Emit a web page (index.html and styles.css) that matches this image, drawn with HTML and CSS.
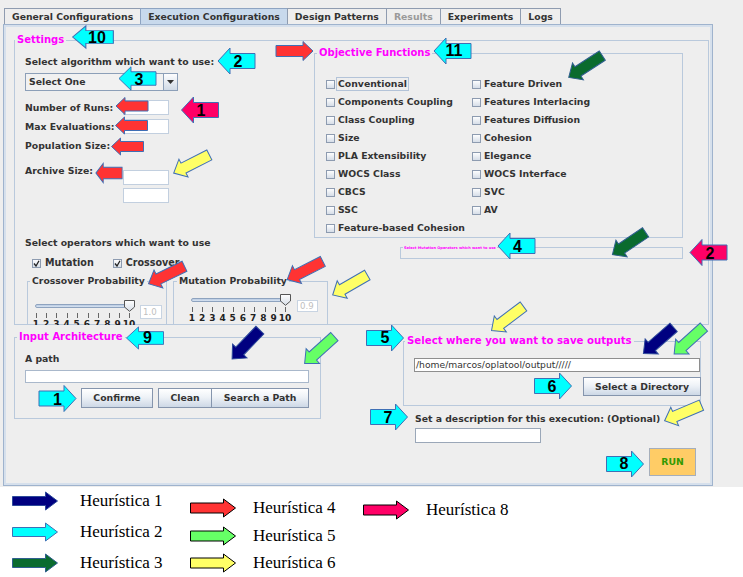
FILE: index.html
```html
<!DOCTYPE html>
<html>
<head>
<meta charset="utf-8">
<link rel="stylesheet" href="styles.css">
</head>
<body>
<div class="app">
  <div class="tabs">
    <div class="tab">General Configurations</div>
    <div class="tab sel">Execution Configurations</div>
    <div class="tab">Design Patterns</div>
    <div class="tab dis">Results</div>
    <div class="tab">Experiments</div>
    <div class="tab">Logs</div>
  </div>
  <div class="panel">
    <div class="group settings">
      <span class="gtitle mag t-settings">Settings</span>
      <div class="s-top">
        <div class="s-left">
          <div class="lbl">Select algorithm which want to use:</div>
          <div class="combo">
            <span class="combo-text">Select One</span>
            <span class="combo-btn"><svg width="7" height="4" viewBox="0 0 7 4"><path d="M0 0H7L3.5 4Z" fill="#333"/></svg></span>
          </div>
          <div class="frow r1"><span class="flbl">Number of Runs:</span><span class="field fnum"></span></div>
          <div class="frow r2"><span class="flbl">Max Evaluations:</span><span class="field fnum"></span></div>
          <div class="frow r3"><span class="flbl">Population Size:</span></div>
          <div class="frow archive"><span class="flbl">Archive Size:</span><span class="field fnum arch1"></span></div>
          <span class="field fnum arch2"></span>
        </div>
        <div class="group objective">
          <span class="gtitle mag t-obj">Objective Functions</span>
          <div class="cb-grid">
            <div class="cb"><span class="box"></span><span class="cbl focus">Conventional</span></div>
            <div class="cb"><span class="box"></span><span class="cbl">Components Coupling</span></div>
            <div class="cb"><span class="box"></span><span class="cbl">Class Coupling</span></div>
            <div class="cb"><span class="box"></span><span class="cbl">Size</span></div>
            <div class="cb"><span class="box"></span><span class="cbl">PLA Extensibility</span></div>
            <div class="cb"><span class="box"></span><span class="cbl">WOCS Class</span></div>
            <div class="cb"><span class="box"></span><span class="cbl">CBCS</span></div>
            <div class="cb"><span class="box"></span><span class="cbl">SSC</span></div>
            <div class="cb"><span class="box"></span><span class="cbl">Feature-based Cohesion</span></div>
            <div class="cb"><span class="box"></span><span class="cbl">Feature Driven</span></div>
            <div class="cb"><span class="box"></span><span class="cbl">Features Interlacing</span></div>
            <div class="cb"><span class="box"></span><span class="cbl">Features Diffusion</span></div>
            <div class="cb"><span class="box"></span><span class="cbl">Cohesion</span></div>
            <div class="cb"><span class="box"></span><span class="cbl">Elegance</span></div>
            <div class="cb"><span class="box"></span><span class="cbl">WOCS Interface</span></div>
            <div class="cb"><span class="box"></span><span class="cbl">SVC</span></div>
            <div class="cb"><span class="box"></span><span class="cbl">AV</span></div>
          </div>
        </div>
      </div>
      <div class="s-bottom">
        <div class="ops">
          <div class="lbl ops-lbl">Select operators which want to use</div>
          <div class="ops-checks">
            <div class="cb cb-mut"><span class="box"><svg width="7" height="7" viewBox="0 0 7 7"><path d="M1 3.5L3 6L6 0.8" fill="none" stroke="#222" stroke-width="1.3"/></svg></span><span class="cbl">Mutation</span></div>
            <div class="cb cb-cross"><span class="box"><svg width="7" height="7" viewBox="0 0 7 7"><path d="M1 3.5L3 6L6 0.8" fill="none" stroke="#222" stroke-width="1.3"/></svg></span><span class="cbl">Crossover</span></div>
          </div>
          <div class="prob-row">
            <div class="group prob cross">
              <span class="gtitle t-prob">Crossover Probability</span>
              <div class="slider">
                <div class="sbody">
                  <div class="track-wrap"><div class="track"></div><svg class="thumb" width="12" height="12" viewBox="0 0 12 12"><defs><linearGradient id="tg" x1="0" y1="0" x2="0" y2="1"><stop offset="0" stop-color="#ffffff"/><stop offset="1" stop-color="#d6dde6"/></linearGradient></defs><path d="M0.5 0.5H10.5V7L5.5 11.3L0.5 7Z" fill="url(#tg)" stroke="#555"/></svg></div>
                  <div class="ticks"><i></i><i></i><i></i><i></i><i></i><i></i><i></i><i></i><i></i><i></i></div>
                  <div class="nums"><span>1</span><span>2</span><span>3</span><span>4</span><span>5</span><span>6</span><span>7</span><span>8</span><span>9</span><span>10</span></div>
                </div>
                <span class="field val">1.0</span>
              </div>
            </div>
            <div class="group prob mut">
              <span class="gtitle t-prob2">Mutation Probability</span>
              <div class="slider">
                <div class="sbody">
                  <div class="track-wrap"><div class="track"></div><svg class="thumb" width="12" height="12" viewBox="0 0 12 12"><path d="M0.5 0.5H10.5V7L5.5 11.3L0.5 7Z" fill="url(#tg)" stroke="#555"/></svg></div>
                  <div class="ticks"><i></i><i></i><i></i><i></i><i></i><i></i><i></i><i></i><i></i><i></i></div>
                  <div class="nums"><span>1</span><span>2</span><span>3</span><span>4</span><span>5</span><span>6</span><span>7</span><span>8</span><span>9</span><span>10</span></div>
                </div>
                <span class="field val val2">0.9</span>
              </div>
            </div>
          </div>
        </div>
        <div class="group mutops"><span class="gtitle tiny">Select Mutation Operators which want to use</span></div>
      </div>
    </div>
    <div class="lower">
      <div class="group input-arch">
        <span class="gtitle mag t-input">Input Architecture</span>
        <div class="lbl">A path</div>
        <span class="field path-in"></span>
        <div class="btn-row">
          <span class="btn b-confirm">Confirme</span>
          <span class="btn b-clean">Clean</span>
          <span class="btn b-search">Search a Path</span>
        </div>
      </div>
      <div class="right-col">
        <div class="group save-box">
          <span class="gtitle mag big t-save">Select where you want to save outputs</span>
          <span class="field out-path">/home/marcos/oplatool/output/////</span>
          <span class="btn b-dir">Select a Directory</span>
        </div>
        <div class="lbl desc-lbl">Set a description for this execution: (Optional)</div>
        <span class="field desc-in"></span>
        <span class="run">RUN</span>
      </div>
    </div>
  </div>
</div>
<div class="legend">
  <div class="lcol c1">
    <div class="litem"><svg class="larr" width="48" height="20" viewBox="-24 -10 48 20"><path class="nv" d="M-22.5,-4.5H10.5V-9L22.5,0L10.5,9V4.5H-22.5Z"/></svg><span>Heurística 1</span></div>
    <div class="litem"><svg class="larr" width="48" height="20" viewBox="-24 -10 48 20"><path class="cy" d="M-22.5,-4.5H10.5V-9L22.5,0L10.5,9V4.5H-22.5Z"/></svg><span>Heurística 2</span></div>
    <div class="litem"><svg class="larr" width="48" height="20" viewBox="-24 -10 48 20"><path class="dg" d="M-22.5,-4.5H10.5V-9L22.5,0L10.5,9V4.5H-22.5Z"/></svg><span>Heurística 3</span></div>
  </div>
  <div class="lcol c2">
    <div class="litem"><svg class="larr" width="48" height="20" viewBox="-24 -10 48 20"><path class="rd blk" d="M-22.5,-5H10.5V-9L22.5,0L10.5,9V5H-22.5Z"/></svg><span>Heurística 4</span></div>
    <div class="litem"><svg class="larr" width="48" height="20" viewBox="-24 -10 48 20"><path class="lg blk" d="M-22.5,-5H10.5V-9L22.5,0L10.5,9V5H-22.5Z"/></svg><span>Heurística 5</span></div>
    <div class="litem"><svg class="larr" width="48" height="20" viewBox="-24 -10 48 20"><path class="ye blk" d="M-22.5,-5H10.5V-9L22.5,0L10.5,9V5H-22.5Z"/></svg><span>Heurística 6</span></div>
  </div>
  <div class="lcol c3">
    <div class="litem"><svg class="larr" width="48" height="20" viewBox="-24 -10 48 20"><path class="pk blk" d="M-22.5,-5H10.5V-9L22.5,0L10.5,9V5H-22.5Z"/></svg><span>Heurística 8</span></div>
  </div>
</div>
<svg class="overlay" width="743" height="577" viewBox="0 0 743 577">
  <defs>
    <path id="tA" d="M-18.5,-7.5H6.5V-13L18.5,0L6.5,13V7.5H-18.5Z"/>
    <path id="tB" d="M-16,-5H7V-8.5L16,0L7,8.5V5H-16Z"/>
    <path id="tC" d="M-20,-5.5H9V-10L20,0L9,10V5.5H-20Z"/>
    <path id="tD" d="M-18.5,-5.5H8.5V-9.5L18.5,0L8.5,9.5V5.5H-18.5Z"/>
  </defs>
  <use href="#tA" class="cy" transform="translate(93,37) rotate(180) scale(1.1,0.85)"/>
  <text class="num" x="97" y="37">10</text>
  <use href="#tA" class="cy" transform="translate(236.5,61) rotate(180)"/>
  <text class="num" x="238" y="61">2</text>
  <use href="#tA" class="cy" transform="translate(137.5,78.5) rotate(180) scale(1,0.9)"/>
  <text class="num" x="139" y="79">3</text>
  <use href="#tA" class="pk" transform="translate(200,110) rotate(180)"/>
  <text class="num" x="201" y="110">1</text>
  <use href="#tB" class="rd" transform="translate(132,106) rotate(180)"/>
  <use href="#tB" class="rd" transform="translate(131.5,125.5) rotate(180)"/>
  <use href="#tB" class="rd" transform="translate(127.5,146.5) rotate(180)"/>
  <use href="#tB" class="rd" transform="translate(109,173) rotate(180) scale(0.82,1.15)"/>
  <use href="#tC" class="ye" transform="translate(191.5,164) rotate(153)"/>
  <use href="#tD" class="rd" transform="translate(294.5,51)"/>
  <use href="#tA" class="cy" transform="translate(452.5,51) rotate(180)"/>
  <text class="num" x="454" y="50">11</text>
  <use href="#tC" class="dg" transform="translate(585.5,66.5) rotate(147)"/>
  <use href="#tA" class="cy" transform="translate(516.5,246) rotate(180)"/>
  <text class="num" x="517.5" y="246">4</text>
  <use href="#tC" class="dg" transform="translate(629,243.5) rotate(146)"/>
  <use href="#tA" class="pk" transform="translate(708.5,252.5) rotate(180)"/>
  <text class="num" x="710" y="253">2</text>
  <use href="#tC" class="rd" transform="translate(166.5,275) rotate(154)"/>
  <use href="#tC" class="rd" transform="translate(305,270.5) rotate(153)"/>
  <use href="#tC" class="ye" transform="translate(350,285) rotate(150)"/>
  <use href="#tA" class="cy" transform="translate(145,338) rotate(180) scale(1,0.85)"/>
  <text class="num" x="147.5" y="337">9</text>
  <use href="#tA" class="cy" transform="translate(57.5,398.5)"/>
  <text class="num" x="57.5" y="399">1</text>
  <use href="#tC" class="nv" transform="translate(246,344.5) rotate(134)"/>
  <use href="#tC" class="lg" transform="translate(319.5,350) rotate(138)"/>
  <use href="#tA" class="cy" transform="translate(385,338)"/>
  <text class="num" x="385" y="337">5</text>
  <use href="#tC" class="ye" transform="translate(507.5,318.5) rotate(143)"/>
  <use href="#tC" class="nv" transform="translate(658.5,340.5) rotate(139)"/>
  <use href="#tC" class="lg" transform="translate(689,340.5) rotate(138)"/>
  <use href="#tA" class="cy" transform="translate(553,386)"/>
  <text class="num" x="552" y="386">6</text>
  <use href="#tA" class="cy" transform="translate(389,417)"/>
  <text class="num" x="388" y="417">7</text>
  <use href="#tC" class="ye" transform="translate(683,413) rotate(157)"/>
  <use href="#tA" class="cy" transform="translate(625,464)"/>
  <text class="num" x="624" y="463">8</text>
</svg>
</body>
</html>
```

FILE: styles.css
```css
* { box-sizing: border-box; }
html, body { margin: 0; padding: 0; }
body {
  width: 743px;
  height: 577px;
  overflow: hidden;
  position: relative;
  background: #ffffff;
  font-family: "DejaVu Sans", "Liberation Sans", sans-serif;
}

.app {
  height: 487px;
  background: #eeeeee;
  padding-top: 8px;
  font-size: 9.3px;
  font-weight: bold;
  color: #333333;
}

/* tabs */
.tabs { display: flex; margin-left: 4px; height: 16px; }
.tab {
  height: 16px;
  line-height: 15px;
  padding: 0 7px;
  border: 1px solid #8f9cb0;
  border-bottom: none;
  background: #eeeeee;
  white-space: nowrap;
}
.tab + .tab { margin-left: -1px; }
.tab.sel { background: #c8d9ec; border-color: #8ea4c2; }
.tab.dis { color: #9a9a9a; }

/* main panel */
.panel {
  margin-left: 3px;
  width: 710px;
  height: 462px;
  border: 1px solid #9fb3cd;
  box-shadow: inset 0 0 0 2px #d6e0ec;
  padding: 15px 0 0 10px;
}

.group {
  position: relative;
  border: 1px solid #b9c9dc;
}
.gtitle {
  position: absolute;
  top: -7px;
  left: 0;
  line-height: 12px;
  padding: 0 2px;
  background: #eeeeee;
  white-space: nowrap;
}
.gtitle.mag { color: #ff00ff; font-size: 10px; }
.gtitle.big { font-size: 10.2px; }
.t-obj, .t-input, .t-prob { left: 2px; }
.t-save { left: 1px; }
.t-prob2 { left: 3px; }
.gtitle.tiny {
  font-size: 3.6px;
  line-height: 4px;
  top: -2.5px;
  left: 2px;
  padding: 0 1px;
  color: #ff00ff;
}

.lbl { line-height: 12px; white-space: nowrap; }

.settings { width: 695px; height: 285px; }
.s-top { display: flex; height: 197px; }
.s-left { width: 299px; padding: 15px 0 0 10px; }

.combo {
  margin-top: 5px;
  width: 153px;
  height: 18px;
  display: flex;
  border: 1px solid #8c9fb8;
  background: #f1f1f1;
}
.combo-text { flex: 1; line-height: 16px; padding-left: 3px; }
.combo-btn {
  width: 14px;
  border-left: 1px solid #8c9fb8;
  background: linear-gradient(#fdfdfe, #d0dae6);
  display: flex;
  align-items: center;
  justify-content: center;
}

.field {
  display: block;
  background: #ffffff;
  border: 1px solid #c2cfdf;
}
.fnum { width: 46px; height: 15px; }

.frow { display: flex; align-items: center; height: 15px; }
.flbl { width: 98px; line-height: 12px; white-space: nowrap; }
.r1 { margin-top: 9px; }
.r2 { margin-top: 4px; }
.r3 { margin-top: 4px; }
.frow.archive { margin-top: 12px; height: auto; align-items: flex-start; }
.arch1 { margin-top: 5px; }
.arch2 { margin: 3px 0 0 98px; }

.objective { width: 369px; height: 185px; margin-top: 12px; }
.cb-grid {
  display: grid;
  grid-auto-flow: column;
  grid-template-rows: repeat(9, 18px);
  grid-template-columns: 146px auto;
  padding: 21px 0 0 11px;
}
.cb { display: flex; align-items: center; white-space: nowrap; }
.box {
  width: 9px;
  height: 9px;
  border: 1px solid #8d9bb0;
  background: linear-gradient(#fdfdfe, #d6dee8);
  margin-right: 3px;
  display: flex;
  align-items: center;
  justify-content: center;
  flex: none;
}
.cbl { line-height: 12px; }
.cbl.focus { outline: 1px solid #b3c3d8; outline-offset: 0; padding: 0 1px; margin-left: -1px; }

.s-bottom { display: flex; height: 86px; }
.ops { width: 385px; padding-left: 10px; }
.ops-lbl { margin-top: -1px; }
.ops-checks { display: flex; align-items: center; height: 12px; margin-top: 8px; }
.cb-mut { margin-left: 7px; }
.cb-mut .box, .cb-cross .box { margin-right: 4px; }
.cb-cross { margin-left: 19px; }
.ops-checks .cbl { font-size: 9.6px; }

.prob-row { display: flex; height: 56px; overflow: hidden; }
.prob { margin-top: 12px; height: 60px; }
.cross { margin-left: 2px; width: 140px; padding: 18px 0 0 7px; }
.mut { margin-left: 6px; width: 155px; padding: 12px 0 0 17px; }

.slider { display: flex; align-items: flex-start; }
.sbody { width: 101px; }
.track-wrap { position: relative; height: 11px; }
.track {
  position: relative;
  top: 4px;
  width: 96px;
  height: 4px;
  border: 1px solid #8ea3bf;
  border-radius: 2px;
  background: linear-gradient(#b9cbe2, #d8e4f1);
}
.thumb { position: absolute; left: 89px; top: 0; }
.ticks, .nums { display: flex; width: 104.4px; margin-left: -4.2px; }
.ticks { height: 5px; margin-top: 2px; }
.ticks i { flex: 1; display: flex; justify-content: center; }
.ticks i::before { content: ""; width: 1px; height: 5px; background: #666; }
.nums { margin-top: 2px; font-size: 9px; line-height: 9px; color: #222; }
.nums span { flex: 1; text-align: center; }

.val {
  width: 22px;
  height: 14px;
  margin: 5px 0 0 4px;
  border-color: #c8d4e2;
  color: #c0c0c0;
  font-weight: normal;
  font-size: 8.6px;
  line-height: 12px;
  padding-left: 2px;
}
.val2 { width: 21px; height: 12px; margin: 6px 0 0 5px; line-height: 10px; }

.mutops { width: 283px; height: 12px; margin-top: 9px; }

/* lower area */
.lower { display: flex; }
.input-arch { width: 307px; height: 82px; margin-top: 12px; padding: 15px 0 0 10px; }
.path-in { width: 284px; height: 13px; margin-top: 5px; border-color: #a9b8cb; }
.btn-row { display: flex; margin-top: 5px; }
.btn {
  display: block;
  height: 20px;
  line-height: 18px;
  text-align: center;
  border: 1px solid #8595ad;
  background: linear-gradient(#ffffff 0%, #eef2f7 45%, #cdd8e6 100%);
  white-space: nowrap;
}
.b-confirm { width: 72px; margin-left: 56px; }
.b-clean { width: 54px; margin-left: 5px; }
.b-search { width: 98px; margin-left: -1px; }

.right-col { margin-left: 82px; width: 298px; }
.save-box { width: 298px; height: 65px; margin-top: 16px; }
.out-path {
  width: 286px;
  height: 14px;
  margin: 16px 0 0 10px;
  border-color: #8e8e8e;
  font-weight: normal;
  font-size: 9.2px;
  line-height: 12px;
  padding-left: 1px;
  color: #333;
}
.b-dir { width: 118px; height: 19px; line-height: 17px; margin: 5px 0 0 179px; }
.desc-lbl { margin-top: 7px; padding-left: 12px; }
.desc-in { width: 126px; height: 15px; margin: 3px 0 0 12px; border-color: #9aa7b8; }
.run {
  display: block;
  width: 47px;
  height: 28px;
  margin: 5px 0 0 246px;
  background: #ffcc66;
  border: 1px solid #a5aebb;
  color: #339900;
  text-align: center;
  line-height: 26px;
  font-size: 9.3px;
}

/* legend */
.legend {
  display: flex;
  height: 90px;
  font-family: "Liberation Serif", "Times New Roman", serif;
  font-size: 17px;
  color: #000;
}
.lcol { display: flex; flex-direction: column; }
.c1 { width: 189px; padding-left: 11px; gap: 2px; }
.c2 { width: 173px; padding-top: 7px; }
.c3 { padding-top: 8px; }
.litem { display: flex; align-items: center; height: 29px; white-space: nowrap; }
.c2 .litem { height: 28px; }
.c1 .larr { margin-right: 21px; }
.c2 .larr, .c3 .larr { margin-right: 16px; }

/* annotation arrows */
.overlay { position: absolute; left: 0; top: 0; pointer-events: none; }
.cy { fill: #00ffff; stroke: #3f6fb5; stroke-width: 1; }
.rd { fill: #ff3333; stroke: #3f6fb5; stroke-width: 1; }
.pk { fill: #ff0066; stroke: #3f6fb5; stroke-width: 1; }
.ye { fill: #ffff66; stroke: #3f6fb5; stroke-width: 1; }
.dg { fill: #0a6b2e; stroke: #2f5f8f; stroke-width: 1; }
.nv { fill: #000080; stroke: #2d4a9a; stroke-width: 1; }
.lg { fill: #66ff66; stroke: #3f6fb5; stroke-width: 1; }
.blk { stroke: #000; }
.num {
  font-family: "Liberation Sans", Arial, sans-serif;
  font-weight: bold;
  font-size: 16px;
  fill: #000;
  text-anchor: middle;
  dominant-baseline: central;
}
```
